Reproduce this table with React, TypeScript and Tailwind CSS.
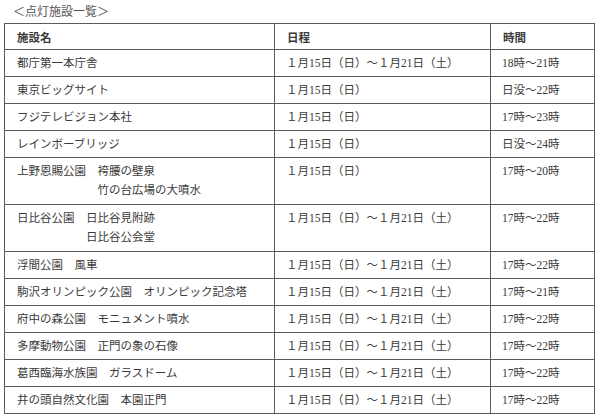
const rows: { name: string[]; date: string; time: string }[] = [
  { name: ['都庁第一本庁舎'], date: '１月15日（日）～１月21日（土）', time: '18時～21時' },
  { name: ['東京ビッグサイト'], date: '１月15日（日）', time: '日没～22時' },
  { name: ['フジテレビジョン本社'], date: '１月15日（日）', time: '17時～23時' },
  { name: ['レインボーブリッジ'], date: '１月15日（日）', time: '日没～24時' },
  { name: ['上野恩賜公園　袴腰の壁泉', '　　　　　　　竹の台広場の大噴水'], date: '１月15日（日）', time: '17時～20時' },
  { name: ['日比谷公園　日比谷見附跡', '　　　　　　日比谷公会堂'], date: '１月15日（日）～１月21日（土）', time: '17時～22時' },
  { name: ['浮間公園　風車'], date: '１月15日（日）～１月21日（土）', time: '17時～22時' },
  { name: ['駒沢オリンピック公園　オリンピック記念塔'], date: '１月15日（日）～１月21日（土）', time: '17時～21時' },
  { name: ['府中の森公園　モニュメント噴水'], date: '１月15日（日）～１月21日（土）', time: '17時～22時' },
  { name: ['多摩動物公園　正門の象の石像'], date: '１月15日（日）～１月21日（土）', time: '17時～22時' },
  { name: ['葛西臨海水族園　ガラスドーム'], date: '１月15日（日）～１月21日（土）', time: '17時～22時' },
  { name: ['井の頭自然文化園　本園正門'], date: '１月15日（日）～１月21日（土）', time: '17時～22時' },
];

export default function App() {
  return (
    <div className="w-[600px] h-[419px] bg-white text-[#3a3a3a] text-[11.5px] leading-[18px] font-['Liberation_Serif','Noto_Sans_CJK_JP',serif] overflow-hidden">
      <div className="pl-[13px] pt-[3px] h-[23px] text-[12px] text-[#555]">＜点灯施設一覧＞</div>
      <table className="ml-[4px] w-[590px] border-collapse table-fixed">
        <colgroup>
          <col className="w-[270px]" />
          <col className="w-[216px]" />
          <col className="w-[104px]" />
        </colgroup>
        <thead>
          <tr className="h-[26px]">
            <th className="border border-[#5a5a5a] pl-[12px] pt-[3px] text-left font-bold align-middle">施設名</th>
            <th className="border border-[#5a5a5a] pl-[12px] pt-[3px] text-left font-bold align-middle">日程</th>
            <th className="border border-[#5a5a5a] pl-[12px] pt-[3px] text-left font-bold align-middle">時間</th>
          </tr>
        </thead>
        <tbody>
          {rows.map((r, i) => (
            <tr key={i} className={r.name.length > 1 ? 'h-[47px]' : 'h-[27px]'}>
              <td className="border border-[#5a5a5a] pl-[12px] align-top pt-[4px] whitespace-nowrap">
                {r.name.map((n, j) => (
                  <div key={j} className={j > 0 ? 'mt-[1px]' : ''}>{n}</div>
                ))}
              </td>
              <td className="border border-[#5a5a5a] pl-[11px] align-top pt-[4px] whitespace-nowrap">{r.date}</td>
              <td className="border border-[#5a5a5a] pl-[11px] align-top pt-[4px] whitespace-nowrap">{r.time}</td>
            </tr>
          ))}
        </tbody>
      </table>
    </div>
  );
}
